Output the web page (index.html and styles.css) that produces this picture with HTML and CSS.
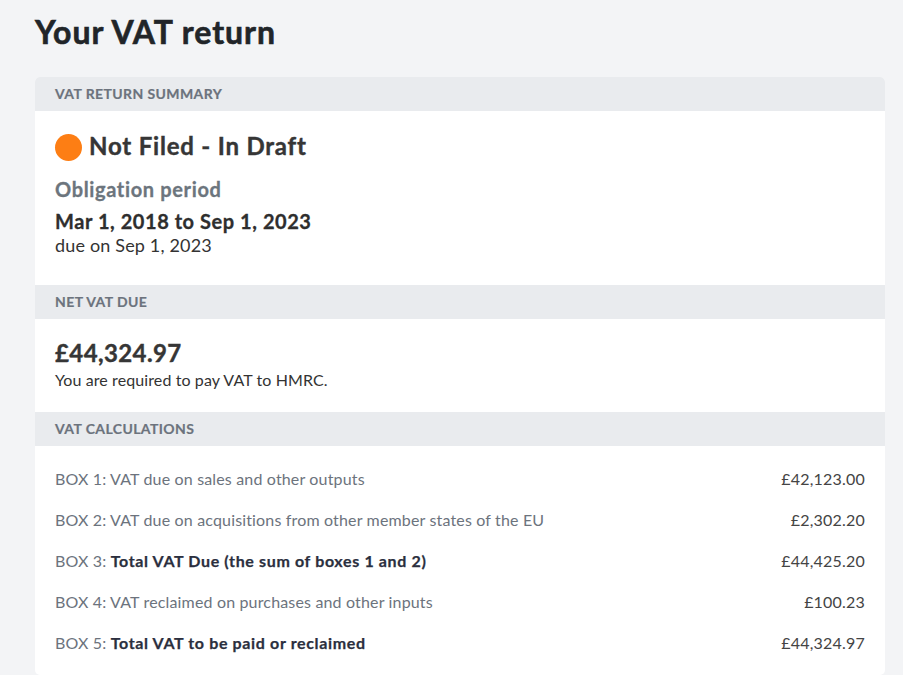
FILE: index.html
```html
<!DOCTYPE html>
<html lang="en">
<head>
<meta charset="utf-8">
<title>Your VAT return</title>
<link rel="stylesheet" href="styles.css">
</head>
<body>
<main class="page">
  <h1 class="title">Your VAT return</h1>
  <section class="card">
    <div class="card-head">VAT Return Summary</div>
    <div class="card-body summary">
      <div class="status"><span class="dot"></span><span class="status-text">Not Filed - In Draft</span></div>
      <div class="period-label">Obligation period</div>
      <div class="period">Mar 1, 2018 to Sep 1, 2023</div>
      <div class="due">due on Sep 1, 2023</div>
    </div>
    <div class="card-head">Net VAT Due</div>
    <div class="card-body net">
      <div class="amount">£44,324.97</div>
      <div class="note">You are required to pay VAT to HMRC.</div>
    </div>
    <div class="card-head">VAT Calculations</div>
    <div class="card-body calcs">
      <div class="row"><span class="label">BOX 1: VAT due on sales and other outputs</span><span class="value">£42,123.00</span></div>
      <div class="row"><span class="label">BOX 2: VAT due on acquisitions from other member states of the EU</span><span class="value">£2,302.20</span></div>
      <div class="row"><span class="label">BOX 3: <b>Total VAT Due (the sum of boxes 1 and 2)</b></span><span class="value">£44,425.20</span></div>
      <div class="row"><span class="label">BOX 4: VAT reclaimed on purchases and other inputs</span><span class="value">£100.23</span></div>
      <div class="row"><span class="label">BOX 5: <b>Total VAT to be paid or reclaimed</b></span><span class="value">£44,324.97</span></div>
    </div>
  </section>
</main>
</body>
</html>
```
FILE: styles.css
```css
html, body {
  margin: 0;
  padding: 0;
  background: #f3f4f6;
  font-family: "Lato", "Noto Sans", sans-serif;
}
.page {
  padding: 12px 18px 0 35px;
}
.title {
  margin: 0;
  font-size: 32px;
  line-height: 40px;
  font-weight: 700;
  letter-spacing: 1px;
  color: #212529;
  -webkit-text-stroke: 0.6px #212529;
}
.card {
  margin-top: 25px;
  width: 850px;
  background: #fff;
  border-radius: 5px;
  overflow: hidden;
}
.card-head {
  height: 34px;
  display: flex;
  align-items: center;
  padding: 0 20px 2px;
  box-sizing: border-box;
  background: #e9ebee;
  color: #6c737d;
  font-size: 14px;
  font-weight: 700;
  text-transform: uppercase;
  letter-spacing: 0.4px;
  -webkit-text-stroke: 0.2px #6c737d;
}
.card-body {
  padding: 0 20px;
}
.summary {
  padding-top: 20px;
  padding-bottom: 30px;
}
.status {
  display: flex;
  align-items: center;
  gap: 7px;
  height: 32px;
  font-size: 24px;
  font-weight: 700;
  color: #363636;
}
.status-text {
  letter-spacing: 0.8px;
  padding-bottom: 4px;
  -webkit-text-stroke: 0.4px #363636;
}
.dot {
  width: 27px;
  height: 27px;
  border-radius: 50%;
  background: #fd7e14;
  flex: none;
}
.period-label {
  margin-top: 12px;
  line-height: 28px;
  font-size: 20px;
  font-weight: 700;
  letter-spacing: 0.65px;
  color: #6c757d;
  -webkit-text-stroke: 0.3px #6c757d;
}
.period {
  margin-top: 4px;
  line-height: 28px;
  font-size: 20px;
  font-weight: 700;
  letter-spacing: 0.55px;
  color: #2e2e2e;
  -webkit-text-stroke: 0.3px #2e2e2e;
}
.due {
  line-height: 20px;
  font-size: 18px;
  letter-spacing: 0.17px;
  color: #333;
}
.net {
  padding-top: 18px;
  padding-bottom: 21px;
}
.amount {
  line-height: 32px;
  font-size: 24px;
  font-weight: 700;
  letter-spacing: 0.4px;
  color: #363636;
  -webkit-text-stroke: 0.4px #363636;
}
.note {
  line-height: 22px;
  font-size: 16px;
  letter-spacing: 0.1px;
  color: #333;
}
.calcs {
  padding-top: 12px;
  padding-bottom: 12px;
}
.row {
  height: 41px;
  display: flex;
  align-items: center;
  justify-content: space-between;
  font-size: 16px;
  letter-spacing: 0.16px;
}
.label {
  color: #6c737d;
}
.label b {
  color: #2b2f3e;
  font-weight: 700;
  letter-spacing: 0.64px;
  -webkit-text-stroke: 0.25px #2b2f3e;
}
.value {
  color: #444;
  letter-spacing: 0.2px;
}
```
